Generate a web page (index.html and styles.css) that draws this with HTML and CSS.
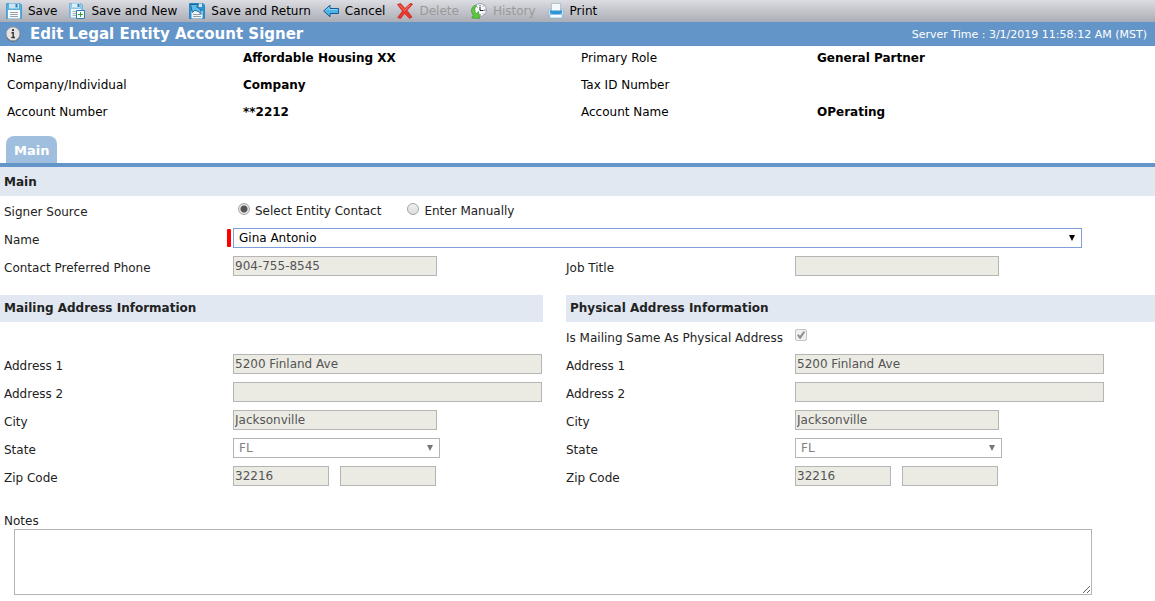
FILE: index.html
```html
<!DOCTYPE html>
<html lang="en">
<head>
    <meta charset="UTF-8">
    <meta name="viewport" content="width=device-width, initial-scale=1.0">
    <title>Edit Legal Entity Account Signer</title>
    <link rel="stylesheet" href="styles.css">
</head>
<body>
    <!-- Toolbar -->
    <div class="toolbar">
        <button type="submit" form="signerForm">
            <svg viewBox="0 0 16 16">
                <path d="M.5 .5h13.500l1.500 1.500v13.500H.5z" fill="#58afdc" stroke="#4a9fd0"/>
                <path d="M3 .5h10v5H3z" fill="#cde5f3"/>
                <path d="M9.500 1h2v3.500h-2z" fill="#2f7fb0"/>
                <path d="M2 7h12v8.500H2z" fill="#fbfcfd"/>
                <path d="M4 9.500h8M4 11.500h8M4 13.500h8" stroke="#9aa3aa"/>
            </svg>
            Save
        </button>
        <button type="submit" form="signerForm">
            <svg viewBox="0 0 16 16">
                <path d="M.5 .5h11.500l1.500 1.500v12.500H.5z" fill="#8fc8e8" stroke="#76b5da"/>
                <path d="M3 .5h8v4H3z" fill="#dceefa"/>
                <path d="M8.500 1h2v3h-2z" fill="#2f7fb0"/>
                <path d="M2 6h10v8.500H2z" fill="#f6f9fb"/>
                <path d="M3.500 8.500h4M3.500 10.500h4M3.500 12.500h4" stroke="#a4b2bd"/>
                <path d="M7.500 7.500h8v8h-8z" fill="#fff" stroke="#2d7bb5"/>
                <path d="M11.500 9v5M9 11.500h5" stroke="#2fa32f"/>
            </svg>
            Save and New
        </button>
        <button type="submit" form="signerForm">
            <svg viewBox="0 0 16 16">
                <path d="M.5 .5h13.500l1.500 1.500v13.500H.5z" fill="#2e92cf" stroke="#2a86be"/>
                <path d="M9.500 .5H13v3.500H9.500z" fill="#cde5f3"/>
                <path d="M2.500 8h11v7.500h-11z" fill="#f4f8fb"/>
                <path d="M4 11.500h7M4 13.500h8" stroke="#8f9ca6"/>
                <path d="M1.500 1.500h8L7.500 4C11 5 12.500 7.500 12 11.500 10.500 9 8.500 7.800 5.500 7.500L3.500 9.500z" fill="#5fb9ea" stroke="#155a8c" stroke-width=".8"/>
            </svg>
            Save and Return
        </button>
        <button type="button">
            <svg viewBox="0 0 16 16">
                <path d="M.7 8L7 2.200v3.300h8.500v5H7v3.300z" fill="#4db2e6" stroke="#125c94"/>
                <path d="M2.500 7.800L6 4.500v2h8.500" fill="none" stroke="#a5dcf7" stroke-width=".8"/>
            </svg>
            Cancel
        </button>
        <button type="button" disabled>
            <svg viewBox="0 0 16 16">
                <path d="M.5 1.500L3.500 .5 8 5.500 13.500 .3 15.500 1.200 10 7.500 15 14 12.500 15.500 7.500 10.500 3.500 15.500 .7 14.500 5.500 8z" fill="#e8372b" stroke="#c4221a" stroke-width=".7"/>
                <path d="M2.500 2l5.300 5.500L13 2" fill="none" stroke="#ff8a78" stroke-width=".8"/>
            </svg>
            Delete
        </button>
        <button type="button" disabled>
            <svg viewBox="0 0 16 16">
                <circle cx="9" cy="7" r="6.400" fill="#f7f9fb" stroke="#8fa0ae"/>
                <path d="M9 2v1.500M13 7h1.500M9 11v1.500M12 3.500l.8-.8M12 10.500l.8.8M5.500 3.500l.8.8" stroke="#555"/>
                <path d="M9 4v3.500h3.500" fill="none" stroke="#222"/>
                <path d="M4.500 2C-.3 4-.5 9.500 2.400 12.200L.8 15l7.700.5L7.500 8.500 5.500 10.500C3.300 8.500 3.300 5 5.500 3z" fill="#5cc83c" stroke="#318f22" stroke-width=".6"/>
            </svg>
            History
        </button>
        <button type="button">
            <svg viewBox="0 0 16 16">
                <path d="M3.500 .5h9v8h-9z" fill="#f3f8fc" stroke="#b3c3d0"/>
                <path d="M.5 7q0-1 1-1H3v2.500h10V6h1.500q1 0 1 1v6H.5z" fill="#d5e6f2" stroke="#8fb4cf" stroke-width=".7"/>
                <path d="M2 7.500h12v3q-6 1.500-12 0z" fill="#2f96d6"/>
                <path d="M2 11.500h12l.5 3.500h-13z" fill="#f6fbff" stroke="#7db5da" stroke-width=".8"/>
            </svg>
            Print
        </button>
    </div>

    <!-- Title Bar -->
    <div class="title-bar">
        <svg viewBox="0 0 16 16">
            <circle cx="8" cy="8.500" r="7.200" fill="#555"/>
            <circle cx="8" cy="7.800" r="6.900" fill="#e3e3e3" stroke="#999" stroke-width=".8"/>
            <path d="M6.500 6.700H8.200V11.500M6.300 11.500h3.700" fill="none" stroke="#333" stroke-width="1.400"/>
            <circle cx="8" cy="4.200" r="1.100" fill="#333"/>
        </svg>
        <h1>Edit Legal Entity Account Signer</h1>
        <span class="server-time">Server Time : 3/1/2019 11:58:12 AM (MST)</span>
    </div>

    <!-- Account Summary -->
    <dl class="summary">
        <dt>Name</dt>
        <dd>Affordable Housing XX</dd>
        <dt>Primary Role</dt>
        <dd>General Partner</dd>
        <dt>Company/Individual</dt>
        <dd>Company</dd>
        <dt>Tax ID Number</dt>
        <dd></dd>
        <dt>Account Number</dt>
        <dd>**2212</dd>
        <dt>Account Name</dt>
        <dd>OPerating</dd>
    </dl>

    <div class="tabs">
        <a href="#main" class="tab">Main</a>
    </div>

    <form id="signerForm">
        <!-- Main Section -->
        <h2 id="main">Main</h2>
        <div class="row" role="radiogroup" aria-labelledby="sourceLabel">
            <span class="label" id="sourceLabel">Signer Source</span>
            <div class="radios">
                <label><input type="radio" name="source" checked>Select Entity Contact</label>
                <label><input type="radio" name="source">Enter Manually</label>
            </div>
        </div>
        <div class="row">
            <label class="label" for="name">Name</label>
            <div class="select required">
                <select id="name">
                    <option>Gina Antonio</option>
                </select>
            </div>
        </div>
        <div class="columns">
            <div class="row">
                <label class="label" for="phone">Contact Preferred Phone</label>
                <input type="text" id="phone" class="medium" value="904-755-8545" disabled>
            </div>
            <div class="row">
                <label class="label" for="jobTitle">Job Title</label>
                <input type="text" id="jobTitle" class="medium" disabled>
            </div>
        </div>

        <!-- Address Sections -->
        <div class="columns addresses">
            <div>
                <h2>Mailing Address Information</h2>
                <div class="row"></div>
                <div class="row">
                    <label class="label" for="mailAddress1">Address 1</label>
                    <input type="text" id="mailAddress1" class="long" value="5200 Finland Ave" disabled>
                </div>
                <div class="row">
                    <label class="label" for="mailAddress2">Address 2</label>
                    <input type="text" id="mailAddress2" class="long" disabled>
                </div>
                <div class="row">
                    <label class="label" for="mailCity">City</label>
                    <input type="text" id="mailCity" class="medium" value="Jacksonville" disabled>
                </div>
                <div class="row">
                    <label class="label" for="mailState">State</label>
                    <div class="select state">
                        <select id="mailState" disabled>
                            <option>FL</option>
                        </select>
                    </div>
                </div>
                <div class="row">
                    <label class="label" for="mailZip">Zip Code</label>
                    <div class="zip">
                        <input type="text" id="mailZip" value="32216" disabled>
                        <input type="text" aria-label="Zip Code extension" disabled>
                    </div>
                </div>
            </div>
            <div>
                <h2>Physical Address Information</h2>
                <div class="row">
                    <label class="label" for="sameAddress">Is Mailing Same As Physical Address</label>
                    <input type="checkbox" id="sameAddress" checked disabled>
                </div>
                <div class="row">
                    <label class="label" for="address1">Address 1</label>
                    <input type="text" id="address1" class="long" value="5200 Finland Ave" disabled>
                </div>
                <div class="row">
                    <label class="label" for="address2">Address 2</label>
                    <input type="text" id="address2" class="long" disabled>
                </div>
                <div class="row">
                    <label class="label" for="city">City</label>
                    <input type="text" id="city" class="medium" value="Jacksonville" disabled>
                </div>
                <div class="row">
                    <label class="label" for="state">State</label>
                    <div class="select state">
                        <select id="state" disabled>
                            <option>FL</option>
                        </select>
                    </div>
                </div>
                <div class="row">
                    <label class="label" for="zip">Zip Code</label>
                    <div class="zip">
                        <input type="text" id="zip" value="32216" disabled>
                        <input type="text" aria-label="Zip Code extension" disabled>
                    </div>
                </div>
            </div>
        </div>

        <!-- Notes -->
        <div class="notes">
            <label for="notes">Notes</label>
            <textarea id="notes"></textarea>
        </div>
    </form>
</body>
</html>
```
FILE: styles.css
```css
/* Global Styling */
* {
    box-sizing: border-box;
}

body {
    font-family: Verdana, 'DejaVu Sans', sans-serif;
    font-size: 12px;
    background-color: white;
    margin: 0;
    color: #222;
}

button, input, select, textarea {
    font-family: inherit;
    font-size: 12px;
}

/* Toolbar */
.toolbar {
    display: flex;
    align-items: center;
    gap: 12px;
    height: 22px;
    padding: 0 6px;
    background: linear-gradient(#dcdde2, #abadb6);
}

.toolbar button {
    display: flex;
    align-items: center;
    gap: 6px;
    padding: 0;
    border: none;
    background: none;
    color: black;
    white-space: nowrap;
    cursor: pointer;
}

.toolbar button:disabled {
    color: #999;
    cursor: default;
}

.toolbar svg, .title-bar svg {
    width: 16px;
    height: 16px;
    flex: none;
}

/* Title Bar */
.title-bar {
    display: flex;
    align-items: center;
    gap: 9px;
    height: 24px;
    padding: 0 8px 0 5px;
    background-color: #6495c8;
    color: white;
}

h1 {
    margin: 0;
    font-size: 15px;
}

.server-time {
    margin-left: auto;
    font-size: 11px;
}

/* Account Summary */
.summary {
    display: grid;
    grid-template-columns: 236px 338fr 236px 338fr;
    row-gap: 3px;
    margin: 0 0 12px;
    padding-left: 7px;
    line-height: 24px;
    color: black;
}

.summary dd {
    margin: 0;
    font-weight: bold;
}

/* Tabs */
.tabs {
    display: flex;
    padding-left: 6px;
    border-bottom: 4px solid #6495c8;
}

.tab {
    padding: 2px 8px 0;
    border-radius: 8px 8px 0 0;
    background-color: #a0bfdf;
    color: white;
    font-size: 13px;
    font-weight: bold;
    line-height: 25px;
    text-decoration: none;
}

/* Sections */
h2 {
    margin: 0;
    padding: 2px 0 0 4px;
    background-color: #e1e8f2;
    font-size: 12px;
    line-height: 27px;
}

.columns {
    display: grid;
    grid-template-columns: 543fr 589fr;
    column-gap: 23px;
}

.addresses {
    margin-top: 15px;
}

.addresses h2 {
    padding-top: 0;
}

/* Form Rows */
.row {
    display: flex;
    align-items: center;
    height: 28px;
}

.label {
    flex: none;
    width: 233px;
    padding: 3px 0 0 4px;
}

.columns > :last-child .label {
    width: 229px;
    padding-left: 0;
}

input[type="text"] {
    height: 20px;
    padding: 0 1px;
    border: 1px solid #b5b5b5;
    background-color: white;
}

input[type="text"]:disabled {
    background-color: #ebebe4;
    color: #545454;
}

input.medium {
    width: 204px;
}

input.long {
    width: 309px;
}

.zip {
    display: flex;
    gap: 11px;
}

.zip input {
    width: 96px;
}

/* Drop-downs */
.select {
    position: relative;
}

.select::after {
    content: "";
    position: absolute;
    top: 7px;
    right: 7px;
    border: 3px solid transparent;
    border-top: 6px solid black;
    border-bottom: none;
    pointer-events: none;
}

.select select {
    display: block;
    appearance: none;
    width: 100%;
    height: 20px;
    padding: 0 20px 0 5px;
    border: 1px solid #b5b5b5;
    border-radius: 0;
    background-color: white;
    color: black;
}

.select select:disabled {
    color: #808080;
    opacity: 1;
}

.state {
    width: 207px;
}

.state::after {
    border-top-color: #777;
}

.required {
    flex: 1;
    margin: 0 73px 0 -6px;
    padding-left: 6px;
}

.required::before {
    content: "";
    position: absolute;
    top: 1px;
    left: 0;
    width: 4px;
    height: 18px;
    border-radius: 1px;
    background-color: red;
}

.required select {
    border-color: #7f9fdb;
}

/* Radios and Check Box */
.radios {
    display: flex;
    gap: 26px;
    padding: 3px 0 0 5px;
}

.radios label {
    display: flex;
    align-items: flex-start;
    gap: 5px;
    line-height: 17px;
}

input[type="radio"], input[type="checkbox"] {
    appearance: none;
    flex: none;
    width: 12px;
    height: 12px;
    margin: 0;
    border: 1px solid #a5a5a5;
    background: linear-gradient(#eee, #ddd);
}

input[type="radio"] {
    border-radius: 50%;
}

input[type="radio"]:checked {
    background: radial-gradient(circle, #555 3px, #e6e6e6 4px);
}

input[type="checkbox"] {
    margin-bottom: 2px;
    border-color: #c5c5c5;
    border-radius: 2px;
    background: #f0f0f0;
}

input[type="checkbox"]:checked::before {
    content: "";
    display: block;
    height: 10px;
    background-color: #909090;
    clip-path: polygon(10% 50%, 25% 42%, 40% 58%, 75% 12%, 92% 20%, 45% 90%, 32% 86%);
}

/* Notes */
.notes {
    padding: 23px 63px 6px 4px;
}

.notes label {
    display: block;
    line-height: 16px;
}

.notes textarea {
    display: block;
    width: calc(100% - 10px);
    height: 66px;
    margin-left: 10px;
    border: 1px solid #b5b5b5;
}
```
